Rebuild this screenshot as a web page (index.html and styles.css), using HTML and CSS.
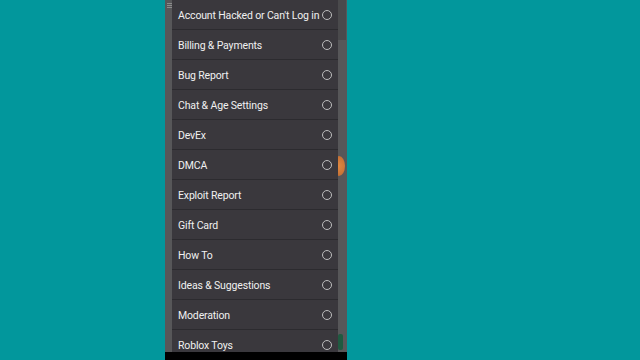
FILE: index.html
```html
<!DOCTYPE html>
<html lang="en">
  <head>
    <meta charset="UTF-8" />
    <meta name="viewport" content="width=device-width, initial-scale=1.0" />
    <title>Help Category</title>
    <link rel="stylesheet" href="styles.css">
  </head>
  <body>
    <div class="phone">
      <div class="screen">
        <span class="menu-icon"></span>
        <span class="top-strip"></span>
        <span class="side-dot"></span>
        <span class="side-tab"></span>
        <ul class="dialog">
          <li class="option"><span>Account Hacked or Can't Log in</span><i class="radio"></i></li>
          <li class="option"><span>Billing &amp; Payments</span><i class="radio"></i></li>
          <li class="option"><span>Bug Report</span><i class="radio"></i></li>
          <li class="option"><span>Chat &amp; Age Settings</span><i class="radio"></i></li>
          <li class="option"><span>DevEx</span><i class="radio"></i></li>
          <li class="option"><span>DMCA</span><i class="radio"></i></li>
          <li class="option"><span>Exploit Report</span><i class="radio"></i></li>
          <li class="option"><span>Gift Card</span><i class="radio"></i></li>
          <li class="option"><span>How To</span><i class="radio"></i></li>
          <li class="option"><span>Ideas &amp; Suggestions</span><i class="radio"></i></li>
          <li class="option"><span>Moderation</span><i class="radio"></i></li>
          <li class="option"><span>Roblox Toys</span><i class="radio"></i></li>
        </ul>
      </div>
      <div class="nav-bar"></div>
    </div>
  </body>
</html>
```

FILE: styles.css
```css
:root {
  --teal: #02979c;
  --dim: #575759;
  --dialog: #3a383d;
  --divider: #2c2b2f;
  --text: #f0f0f0;
  --radio: #bdbdbd;
}

* {
  margin: 0;
  padding: 0;
  box-sizing: border-box;
}

body {
  width: 640px;
  height: 360px;
  overflow: hidden;
  background-color: var(--teal);
  font-family: Roboto, "Noto Sans", sans-serif;
}

.phone {
  width: 182px;
  height: 360px;
  margin-left: 165px;
  display: flex;
  flex-direction: column;
}

.screen {
  position: relative;
  flex: 1;
  overflow: hidden;
  background-color: var(--dim);
  padding-left: 7px;
}

/* little hamburger peeking out above the dialog */
.menu-icon {
  position: absolute;
  left: 2px;
  top: 3px;
  width: 5px;
  height: 1px;
  background-color: #8c8c8c;
  box-shadow: 0 2px 0 #8c8c8c, 0 4px 0 #8c8c8c;
}

.top-strip {
  position: absolute;
  left: 173px;
  top: 0;
  width: 8px;
  height: 40px;
  background-color: #4a4a4c;
}

.side-dot {
  position: absolute;
  left: 168px;
  top: 156px;
  width: 12px;
  height: 20px;
  border-radius: 50%;
  background: radial-gradient(circle at 40% 50%, #e08a42, #c06a30);
}

.side-tab {
  position: absolute;
  left: 173px;
  top: 334px;
  width: 5px;
  height: 16px;
  border-radius: 2px;
  background-color: #1f5a40;
}

.dialog {
  position: relative;
  width: 166px;
  list-style: none;
  background-color: var(--dialog);
}

.option {
  height: 30px;
  display: flex;
  align-items: center;
  justify-content: space-between;
  padding: 2px 6px 0 6px;
  border-bottom: 1px solid var(--divider);
  color: var(--text);
  font-size: 10.5px;
  letter-spacing: -0.15px;
  white-space: nowrap;
}

.radio {
  width: 10px;
  height: 10px;
  margin-top: -2px;
  border: 1.2px solid var(--radio);
  border-radius: 50%;
  flex-shrink: 0;
}

.nav-bar {
  height: 8px;
  background-color: #000;
}
```
